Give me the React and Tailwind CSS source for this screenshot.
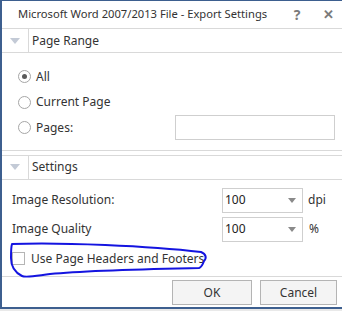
import React from "react";

const FONT = { fontFamily: '"Noto Sans", "Open Sans", sans-serif' };

function Triangle() {
  return (
    <svg width="10" height="6" viewBox="0 0 10 6">
      <path d="M0 0 L10 0 L5 6 Z" fill="#c3cad6" />
    </svg>
  );
}

function SectionHeader({ title }) {
  return (
    <div className="flex h-[24px] border-b border-[#d9d9d9]">
      <div className="flex w-[27px] items-center justify-center border-r border-[#d9d9d9]">
        <Triangle />
      </div>
      <div className="flex items-center pl-[3px] text-[12px] text-[#333]">{title}</div>
    </div>
  );
}

function Radio({ checked, label }) {
  return (
    <div className="flex h-[25.5px] items-center">
      <div className="ml-[16px] flex h-[13px] w-[13px] items-center justify-center rounded-full border border-[#a6a6a6] bg-white">
        {checked && <div className="h-[5px] w-[5px] rounded-full bg-[#5a5a5a]" />}
      </div>
      <span className="ml-[5px] text-[12px] text-[#333]">{label}</span>
    </div>
  );
}

function Select({ value }) {
  return (
    <div className="flex h-[25px] w-[81px] items-center justify-between border border-[#cfcfcf] bg-white pl-[2px] pr-[6px] text-[12px] text-[#222]">
      <span>{value}</span>
      <svg width="8" height="5" viewBox="0 0 8 5">
        <path d="M0 0 L8 0 L4 5 Z" fill="#8a8a8a" />
      </svg>
    </div>
  );
}

export default function App() {
  return (
    <div className="relative h-[311px] w-[342px] overflow-hidden bg-[#e9e9e9]" style={FONT}>
      <div className="flex h-[309px] flex-col border-b-2 border-l-2 border-t border-[#3d5f8f] bg-white">
        {/* title bar */}
        <div className="flex h-[28px] items-center border-b border-[#d9d9d9] pl-[16px] pr-[4px] text-[#333]">
          <span className="flex-1 whitespace-nowrap text-[11.2px]">Microsoft Word 2007/2013 File - Export Settings</span>
          <span className="w-[24px] text-center text-[14px] font-bold text-[#7a7a7a]">?</span>
          <span className="ml-[9px] w-[20px] text-center text-[13px] font-bold text-[#7a7a7a]">✕</span>
        </div>

        <SectionHeader title="Page Range" />

        <div className="flex flex-col border-b border-[#d9d9d9] pb-[9px] pt-[11px]">
          <Radio checked label="All" />
          <Radio label="Current Page" />
          <div className="flex items-center justify-between pr-[7px]">
            <Radio label="Pages:" />
            <div className="h-[25px] w-[160px] border border-[#cfcfcf] bg-white" />
          </div>
        </div>

        <div className="h-[5px] border-b border-[#d9d9d9]" />

        <SectionHeader title="Settings" />

        <div className="flex flex-col pl-[10px] pt-[8px] text-[12px] text-[#333]">
          <div className="flex items-center">
            <span className="w-[210px]">Image Resolution:</span>
            <Select value="100" />
            <span className="ml-[5px]">dpi</span>
          </div>
          <div className="mt-[4px] flex items-center">
            <span className="w-[210px]">Image Quality</span>
            <Select value="100" />
            <span className="ml-[6px]">%</span>
          </div>
          <div className="mt-[10px] flex h-[14px] items-center">
            <div className="h-[13px] w-[13px] border border-[#b5b5b5] bg-white" />
            <span className="ml-[6px]">Use Page Headers and Footers</span>
          </div>
        </div>

        <div className="mt-auto flex justify-end gap-[8px] border-t border-[#d9d9d9] pb-[2px] pr-[5px] pt-[3px]">
          <button className="h-[25px] w-[80px] border border-[#b4b4b4] bg-[#f4f4f4] text-[12px] text-[#333]">OK</button>
          <button className="h-[25px] w-[77px] border border-[#b4b4b4] bg-[#f4f4f4] text-[12px] text-[#333]">Cancel</button>
        </div>
      </div>

      {/* hand-drawn highlight */}
      <svg className="pointer-events-none absolute left-0 top-0" width="342" height="311" viewBox="0 0 342 311">
        <path
          d="M12 244 C 60 242, 150 246, 201 252 C 206 254, 207 258, 204 261 C 203 264, 202 267, 199 268 C 150 269, 90 270, 50 274 C 35 276, 26 278, 22 276 C 14 272, 11 266, 11 258 C 11 252, 11 247, 12 244 Z"
          fill="none"
          stroke="#1414e0"
          strokeWidth="2"
          strokeLinejoin="round"
        />
      </svg>
    </div>
  );
}
